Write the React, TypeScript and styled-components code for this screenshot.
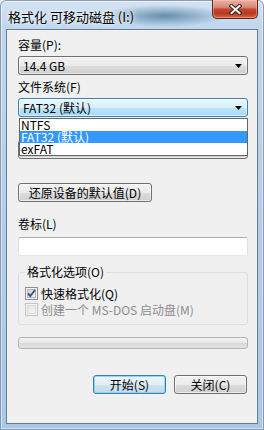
import React from 'react';
import styled, { createGlobalStyle } from 'styled-components';

const FONT = `"Noto Sans CJK SC", "Noto Sans", sans-serif`;

const GlobalStyle = createGlobalStyle`
  html, body {
    margin: 0;
    padding: 0;
    background: #ffffff;
  }
  body {
    font-family: ${FONT};
    font-size: 12px;
    color: #000000;
  }
  * {
    box-sizing: border-box;
  }
`;

const Window = styled.div`
  width: 264px;
  height: 430px;
  display: flex;
  flex-direction: column;
  padding: 0 6px 6px 6px;
  border-radius: 6px 6px 0 0;
  background: linear-gradient(to bottom, #d3e3f3 0px, #bfd6ed 29px, #b0cce9 60%, #a8c7e6 100%);
  box-shadow: inset 0 0 0 1px rgba(70, 90, 110, 0.55), inset 0 0 0 2px rgba(255, 255, 255, 0.5);
`;

const TitleBar = styled.div`
  height: 29px;
  flex: none;
  display: flex;
  justify-content: space-between;
  align-items: flex-start;
  padding-left: 2px;
  background: radial-gradient(ellipse 62px 11px at 63% 55%, rgba(55, 110, 140, 0.7), rgba(55, 110, 140, 0) 100%);
`;

const Title = styled.div`
  margin-top: 10px;
  font-size: 13px;
  line-height: 14px;
  white-space: nowrap;
  text-shadow: 0 0 6px rgba(255, 255, 255, 0.9), 0 0 3px rgba(255, 255, 255, 0.9);
`;

const CloseButton = styled.div`
  width: 46px;
  height: 19px;
  display: flex;
  align-items: center;
  justify-content: center;
  border: 1px solid #6a2217;
  border-top: none;
  border-radius: 0 0 5px 5px;
  background: linear-gradient(to bottom, #eab0a3 0%, #d88a77 40%, #c4462e 52%, #b63a22 75%, #d46a45 100%);
  box-shadow: inset 0 0 0 1px rgba(255, 210, 200, 0.4);
`;

const Client = styled.div`
  flex: 1;
  display: flex;
  flex-direction: column;
  border: 1px solid #6b7d90;
  background: #f0f0f0;
  padding: 8px 9px 0 11px;
`;

const Label = styled.div<{ $top?: number; $covered?: boolean }>`
  height: 14px;
  line-height: 14px;
  margin-top: ${(p) => p.$top ?? 0}px;
  white-space: nowrap;
  visibility: ${(p) => (p.$covered ? 'hidden' : 'visible')};
`;

const ComboWrap = styled.div<{ $top?: number }>`
  position: relative;
  margin-top: ${(p) => p.$top ?? 4}px;
`;

const Combo = styled.div<{ $active?: boolean }>`
  height: 19px;
  display: flex;
  align-items: center;
  justify-content: space-between;
  padding: 0 5px 0 4px;
  line-height: 17px;
  border: 1px solid ${(p) => (p.$active ? '#3c7fb1' : '#707070')};
  border-radius: 3px;
  background: ${(p) =>
    p.$active
      ? 'linear-gradient(to bottom, #eaf6fd 0%, #d9f0fc 50%, #bee6fd 51%, #a7d9f5 100%)'
      : 'linear-gradient(to bottom, #f2f2f2 0%, #ebebeb 50%, #dddddd 51%, #cfcfcf 100%)'};
  box-shadow: inset 0 0 0 1px rgba(255, 255, 255, 0.55);
`;

const ComboText = styled.span<{ $covered?: boolean }>`
  white-space: nowrap;
  visibility: ${(p) => (p.$covered ? 'hidden' : 'visible')};
`;

const DropList = styled.div`
  position: absolute;
  top: calc(100% + 1px);
  left: 1px;
  right: 0;
  border: 1px solid #646464;
  background: #ffffff;
  z-index: 2;
`;

const DropItem = styled.div<{ $selected?: boolean }>`
  height: 12px;
  line-height: 12px;
  padding-left: 1px;
  white-space: nowrap;
  background: ${(p) => (p.$selected ? '#3399ff' : 'transparent')};
  color: ${(p) => (p.$selected ? '#ffffff' : '#000000')};
`;

const PushButton = styled.div<{ $width: number; $default?: boolean; $top?: number }>`
  width: ${(p) => p.$width}px;
  height: 19px;
  margin-top: ${(p) => p.$top ?? 0}px;
  display: flex;
  align-items: center;
  justify-content: center;
  line-height: 17px;
  white-space: nowrap;
  border: 1px solid ${(p) => (p.$default ? '#3c7fb1' : '#707070')};
  border-radius: 3px;
  background: ${(p) =>
    p.$default
      ? 'linear-gradient(to bottom, #eef6fb 0%, #e2eef6 50%, #cfe3ef 51%, #c2dbea 100%)'
      : 'linear-gradient(to bottom, #f2f2f2 0%, #ebebeb 50%, #dddddd 51%, #cfcfcf 100%)'};
  box-shadow: ${(p) =>
    p.$default ? 'inset 0 0 0 1px #8fd8f5' : 'inset 0 0 0 1px rgba(255, 255, 255, 0.6)'};
`;

const TextBox = styled.div`
  height: 19px;
  margin-top: 6px;
  border: 1px solid;
  border-color: #abadb3 #dbdfe6 #e3e9ef #e2e3ea;
  border-radius: 2px;
  background: #ffffff;
`;

const Group = styled.fieldset`
  margin: 9px 0 0 0;
  padding: 7px 6px 7px 6px;
  border: 1px solid #d5dfe5;
  border-radius: 3px;
  min-width: 0;
`;

const Legend = styled.legend`
  padding: 0 2px;
  line-height: 14px;
  height: 14px;
`;

const CheckRow = styled.div<{ $disabled?: boolean }>`
  display: flex;
  align-items: center;
  gap: 3px;
  height: 15px;
  margin-bottom: 1px;
  white-space: nowrap;
  color: ${(p) => (p.$disabled ? '#8d8d8d' : '#000000')};

  &:last-child {
    margin-bottom: 0;
  }
`;

const Progress = styled.div`
  height: 12px;
  margin-top: 12px;
  border: 1px solid #b4b4b4;
  border-radius: 3px;
  background: linear-gradient(to bottom, #f4f4f4 0%, #e8e8e8 45%, #dadada 55%, #e2e2e2 100%);
`;

const ButtonRow = styled.div`
  display: flex;
  justify-content: flex-end;
  gap: 8px;
  margin-top: 26px;
  padding-right: 1px;
`;

const Arrow = () => (
  <svg width="7" height="4" viewBox="0 0 7 4">
    <polygon points="0,0 7,0 3.5,4" fill="#000" />
  </svg>
);

const CloseX = () => (
  <svg width="13" height="11" viewBox="0 0 13 11">
    <g strokeLinecap="square">
      <line x1="2.5" y1="2" x2="10.5" y2="9" stroke="#3b1f1a" strokeWidth="4" />
      <line x1="10.5" y1="2" x2="2.5" y2="9" stroke="#3b1f1a" strokeWidth="4" />
      <line x1="2.5" y1="2" x2="10.5" y2="9" stroke="#f4f4f4" strokeWidth="2" />
      <line x1="10.5" y1="2" x2="2.5" y2="9" stroke="#f4f4f4" strokeWidth="2" />
    </g>
  </svg>
);

const CheckBox = ({ checked, disabled }: { checked?: boolean; disabled?: boolean }) => (
  <svg width="13" height="13" viewBox="0 0 13 13">
    <defs>
      <linearGradient id={disabled ? 'cbd' : 'cbn'} x1="0" y1="0" x2="1" y2="1">
        <stop offset="0" stopColor={disabled ? '#e4e4e4' : '#cbcfd5'} />
        <stop offset="1" stopColor={disabled ? '#f6f6f6' : '#f7f7f7'} />
      </linearGradient>
    </defs>
    <rect x="0.5" y="0.5" width="12" height="12" fill="#f4f4f4" stroke={disabled ? '#c4c4c4' : '#8e8f8f'} />
    <rect x="2.5" y="2.5" width="8" height="8" fill={`url(#${disabled ? 'cbd' : 'cbn'})`} stroke={disabled ? '#dadada' : '#b5b9bf'} />
    {checked && (
      <path d="M3 6.5 L5.3 9 L10 3" fill="none" stroke="#3c5189" strokeWidth="1.9" />
    )}
  </svg>
);

export default function App(): JSX.Element {
  return (
    <>
      <GlobalStyle />
      <Window>
        <TitleBar>
          <Title>格式化 可移动磁盘 (I:)</Title>
          <CloseButton>
            <CloseX />
          </CloseButton>
        </TitleBar>
        <Client>
          <Label>容量(P):</Label>
          <ComboWrap>
            <Combo>
              <ComboText>14.4 GB</ComboText>
              <Arrow />
            </Combo>
          </ComboWrap>

          <Label $top={5}>文件系统(F)</Label>
          <ComboWrap>
            <Combo $active>
              <ComboText>FAT32 (默认)</ComboText>
              <Arrow />
            </Combo>
            <DropList>
              <DropItem>NTFS</DropItem>
              <DropItem $selected>FAT32 (默认)</DropItem>
              <DropItem>exFAT</DropItem>
            </DropList>
          </ComboWrap>

          {/* allocation unit field, covered by the open list */}
          <Label $top={5} $covered>分配单元大小(A)</Label>
          <ComboWrap>
            <Combo>
              <ComboText $covered>4096 字节</ComboText>
              <Arrow />
            </Combo>
          </ComboWrap>

          <PushButton $width={134} $top={24}>还原设备的默认值(D)</PushButton>

          <Label $top={15}>卷标(L)</Label>
          <TextBox />

          <Group>
            <Legend>格式化选项(O)</Legend>
            <CheckRow>
              <CheckBox checked />
              <span>快速格式化(Q)</span>
            </CheckRow>
            <CheckRow $disabled>
              <CheckBox disabled />
              <span>创建一个 MS-DOS 启动盘(M)</span>
            </CheckRow>
          </Group>

          <Progress />

          <ButtonRow>
            <PushButton $width={73} $default>开始(S)</PushButton>
            <PushButton $width={73}>关闭(C)</PushButton>
          </ButtonRow>
        </Client>
      </Window>
    </>
  );
}
